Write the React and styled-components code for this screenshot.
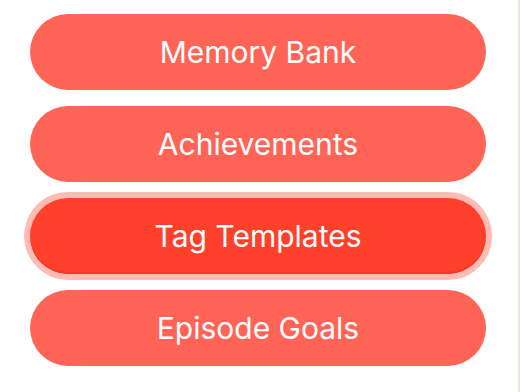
import styled, { createGlobalStyle } from "styled-components";

const items = [
  { label: "Memory Bank" },
  { label: "Achievements" },
  { label: "Tag Templates", focused: true },
  { label: "Episode Goals" },
];

const App = () => {
  return (
    <>
      <GlobalStyle />
      <StyledPage>
        <StyledMenu>
          {items.map((item) => (
            <StyledButton key={item.label} $focused={item.focused}>
              {item.label}
            </StyledButton>
          ))}
        </StyledMenu>
      </StyledPage>
    </>
  );
};

const GlobalStyle = createGlobalStyle`
  html, body {
    margin: 0;
    padding: 0;
    background: #fff;
  }
  body {
    font-family: Inter, "Noto Sans", sans-serif;
  }
`;

const StyledPage = styled.div`
  width: 520px;
  height: 392px;
  box-sizing: border-box;
  background: #fff;
  border-right: 2px solid #ece4e3;
  padding: 14px 0 0 30px;
`;

const StyledMenu = styled.div`
  display: flex;
  flex-direction: column;
  gap: 16px;
  width: 456px;
`;

const StyledButton = styled.button`
  height: 76px;
  width: 100%;
  border: none;
  border-radius: 38px;
  background: ${(p) => (p.$focused ? "#ff402b" : "#ff6456")};
  box-shadow: ${(p) =>
    p.$focused ? "0 0 0 6px #ffbcb5, inset 0 -2px 0 #f2392a" : "none"};
  color: #fff;
  font-family: Inter, "Noto Sans", sans-serif;
  font-size: 30px;
  font-weight: 400;
  letter-spacing: 0;
  display: flex;
  align-items: center;
  justify-content: center;
  padding: 0 0 1px;
  cursor: pointer;
`;

export default App;
